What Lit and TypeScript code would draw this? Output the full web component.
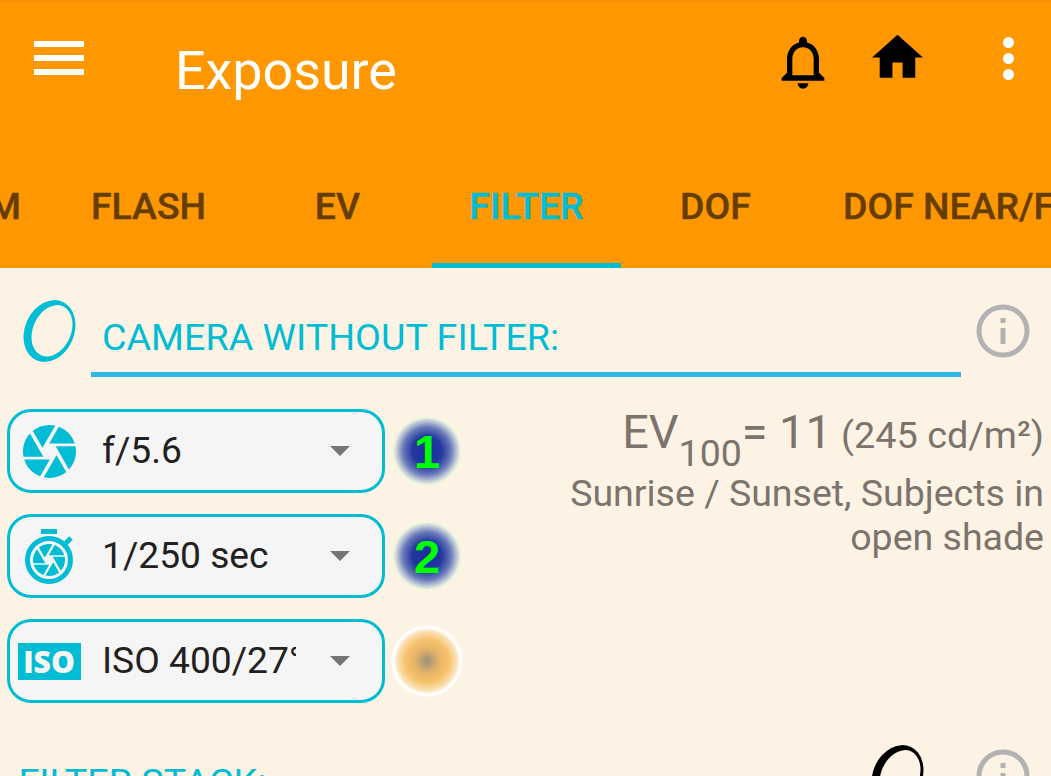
import { LitElement, html, css, svg } from "lit";
import { customElement } from "lit/decorators.js";

const CAMERA_BLADES =
  "M9.4 10.5l4.77-8.26C13.47 2.09 12.75 2 12 2c-2.4 0-4.6.85-6.32 2.25l3.66 6.35.06-.1zM21.54 9c-.92-2.92-3.15-5.26-6-6.34L11.88 9h9.66zm.26 1h-7.49l.29.5 4.76 8.25C21 16.97 22 14.61 22 12c0-.69-.07-1.35-.2-2zM8.54 12l-3.9-6.75C3.01 7.03 2 9.39 2 12c0 .69.07 1.35.2 2h7.49l-1.15-2zm-6.08 3c.92 2.92 3.15 5.26 6 6.34L12.12 15H2.46zm11.27 0l-3.9 6.76c.7.15 1.42.24 2.17.24 2.4 0 4.6-.85 6.32-2.25l-3.66-6.35-.93 1.6z";

const lens = (color: string) => html`
  <svg class="lens" viewBox="0 0 53 62" width="53" height="62">
    <ellipse cx="26.5" cy="31" rx="24.6" ry="32" transform="rotate(24 26.5 31)" fill=${color}></ellipse>
    <ellipse cx="29" cy="30.8" rx="19" ry="26.8" transform="rotate(24 29 30.8)" fill="#fdf3e5"></ellipse>
  </svg>
`;

const info = html`
  <svg class="info" viewBox="0 0 54 54" width="54" height="54">
    <circle cx="27" cy="27" r="24" fill="none" stroke="#b2b2b2" stroke-width="5"></circle>
    <rect x="24.5" y="14" width="5" height="5" fill="#b2b2b2"></rect>
    <rect x="24.5" y="24" width="5" height="16" fill="#b2b2b2"></rect>
  </svg>
`;

const aperture = html`
  <svg viewBox="2 2 20 20" width="53" height="53"><path fill="#00bcd4" d=${CAMERA_BLADES}></path></svg>
`;

const stopwatch = html`
  <svg viewBox="0 0 54 55" width="54" height="55">
    <rect x="19" y="0" width="16" height="5" fill="#00bcd4"></rect>
    <path d="M43 15l6-6" stroke="#00bcd4" stroke-width="5" fill="none"></path>
    <circle cx="27" cy="31" r="21.5" fill="none" stroke="#00bcd4" stroke-width="5"></circle>
    <g transform="translate(11 15) scale(1.6) translate(-2 -2)">
      ${svg`<path fill="#00bcd4" d=${CAMERA_BLADES}></path>`}
    </g>
  </svg>
`;

@customElement("app-root")
export class AppRoot extends LitElement {
  render() {
    return html`
      <header class="appbar">
        <div class="toolbar">
          <div class="menu"><span></span><span></span><span></span></div>
          <div class="title">Exposure</div>
          <svg class="bell" viewBox="0 0 24 24" width="64" height="64">
            <path d="M12 22c1.1 0 2-.9 2-2h-4c0 1.1.9 2 2 2zm6-6v-5c0-3.07-1.63-5.64-4.5-6.32V4c0-.83-.67-1.5-1.5-1.5s-1.5.67-1.5 1.5v.68C7.64 5.36 6 7.92 6 11v5l-2 2v1h16v-1l-2-2zm-2 1H8v-6c0-2.48 1.51-4.5 4-4.5s4 2.02 4 4.5v6z"></path>
          </svg>
          <svg class="home" viewBox="0 0 24 24" width="61" height="61">
            <path d="M10 20v-6h4v6h5v-8h3L12 3 2 12h3v8z"></path>
          </svg>
          <div class="more"><span></span><span></span><span></span></div>
        </div>
        <nav class="tabs">
          <div class="tab-clip"><div class="tab">FOCAL 35MM</div></div>
          <div class="tab">FLASH</div>
          <div class="tab">EV</div>
          <div class="tab active">FILTER</div>
          <div class="tab">DOF</div>
          <div class="tab">DOF NEAR/FAR</div>
        </nav>
      </header>

      <main class="content">
        <section class="head">
          <div class="lens-cell">${lens("#00bcd4")}</div>
          <div class="field">CAMERA WITHOUT FILTER:</div>
          ${info}
        </section>

        <section class="settings">
          <div class="pickers">
            <div class="picker-row">
              <div class="spinner">
                <div class="icon">${aperture}</div>
                <div class="value">f/5.6</div>
                <div class="arrow"></div>
              </div>
              <div class="dial blue">1</div>
            </div>
            <div class="picker-row">
              <div class="spinner">
                <div class="icon">${stopwatch}</div>
                <div class="value">1/250 sec</div>
                <div class="arrow"></div>
              </div>
              <div class="dial blue">2</div>
            </div>
            <div class="picker-row">
              <div class="spinner">
                <div class="icon"><div class="iso">ISO</div></div>
                <div class="value">ISO 400/27°</div>
                <div class="arrow"></div>
              </div>
              <div class="dial amber"></div>
            </div>
          </div>
          <div class="result">
            <div class="ev"><span class="big">EV<sub>100</sub>= 11</span> (245 cd/m²)</div>
            <div class="desc">Sunrise / Sunset, Subjects in open shade</div>
          </div>
        </section>

        <section class="head stack">
          <div class="stack-title">FILTER STACK:</div>
          ${lens("#000")}
          ${info}
        </section>
      </main>
    `;
  }

  static styles = css`
    :host {
      display: block;
      height: 776px;
      overflow: hidden;
      background: #fdf3e5;
      font-family: Roboto, sans-serif;
    }
    svg {
      display: block;
      flex-shrink: 0;
    }

    .appbar {
      height: 268px;
      background: linear-gradient(#f39000, #ff9800 4px);
      overflow: hidden;
    }
    .toolbar {
      display: flex;
      height: 144px;
      align-items: flex-start;
    }
    .menu {
      display: flex;
      flex-direction: column;
      gap: 8.5px;
      width: 50px;
      margin: 41px 0 0 34px;
    }
    .menu span {
      height: 5.5px;
      background: #fff;
    }
    .title {
      margin: 40px 0 0 91px;
      font-size: 53.8px;
      line-height: 61px;
      color: #fff;
    }
    .bell {
      margin: 30px 0 0 auto;
    }
    .home {
      margin: 27px 0 0 32px;
    }
    .more {
      display: flex;
      flex-direction: column;
      gap: 5px;
      margin: 37px 37px 0 75px;
    }
    .more span {
      width: 11px;
      height: 11px;
      border-radius: 50%;
      background: #fff;
    }

    .tabs {
      display: flex;
      height: 124px;
    }
    .tab-clip {
      display: flex;
      justify-content: flex-end;
      width: 54px;
      flex-shrink: 0;
      overflow: hidden;
    }
    .tab {
      flex-shrink: 0;
      box-sizing: border-box;
      min-width: 189px;
      padding: 41px 33px 0;
      text-align: center;
      white-space: nowrap;
      font-size: 37.4px;
      line-height: 43px;
      font-weight: 500;
      color: #663d00;
      -webkit-text-stroke: 0.4px #663d00;
    }
    .tab.active {
      color: #00bcd4;
      -webkit-text-stroke: 0.4px #00bcd4;
      border-bottom: 5px solid #00bcd4;
    }

    .content {
      display: flex;
      flex-direction: column;
    }
    .head {
      display: flex;
      align-items: flex-start;
      height: 109px;
      padding: 32px 21px 0 23px;
      box-sizing: border-box;
    }
    .lens-cell {
      width: 68px;
      flex-shrink: 0;
    }
    .field {
      box-sizing: border-box;
      width: 871px;
      height: 77px;
      padding: 16px 0 0 11px;
      border-bottom: 5px solid #33b5e5;
      margin-right: 15px;
      font-size: 37.7px;
      line-height: 43px;
      color: #00bcd4;
    }
    .info {
      margin-top: 4px;
    }

    .settings {
      box-sizing: border-box;
      display: flex;
      justify-content: space-between;
      padding: 32px 7px 0;
      height: 336px;
    }
    .pickers {
      display: flex;
      flex-direction: column;
      gap: 21px;
    }
    .picker-row {
      display: flex;
      align-items: center;
      gap: 7px;
    }
    .spinner {
      box-sizing: border-box;
      display: flex;
      align-items: center;
      width: 378px;
      height: 84px;
      border: 3px solid #00bcd4;
      border-radius: 24px;
      background: #f5f5f5;
    }
    .icon {
      display: flex;
      justify-content: center;
      width: 78px;
      flex-shrink: 0;
    }
    .value {
      width: 194px;
      margin: 0 0 2px 14px;
      overflow: hidden;
      white-space: nowrap;
      font-size: 37.2px;
      line-height: 43px;
      color: #212121;
    }
    .arrow {
      width: 0;
      height: 0;
      margin-left: 34px;
      border-style: solid;
      border-width: 10px 10px 0;
      border-color: #757575 transparent transparent;
    }
    .iso {
      box-sizing: border-box;
      width: 63px;
      height: 37px;
      background: #00bcd4;
      text-align: center;
      font-family: "Open Sans", sans-serif;
      font-size: 30px;
      font-weight: 800;
      line-height: 37px;
      color: #f5f5f5;
    }
    .dial {
      width: 70px;
      height: 70px;
      border-radius: 50%;
      text-align: center;
      font-family: "Liberation Sans", sans-serif;
      font-size: 47px;
      font-weight: 700;
      line-height: 72px;
      color: #00ff00;
    }
    .dial.blue {
      background: radial-gradient(circle closest-side, #1a2f9e 0%, #22389f 42%, #6878b8 68%, #c0c9d8 86%, #eef6dd 96%, #eef6dd 100%);
    }
    .dial.amber {
      background: radial-gradient(circle closest-side, #9b907c 0%, #e6b468 35%, #f7c26c 62%, #fbe2b8 85%, #fff 95%, #fff 100%);
      box-shadow: 0 0 1px 1px #fffaf2;
    }

    .result {
      width: 480px;
      text-align: right;
      color: #7b736c;
      font-size: 37.5px;
    }
    .ev {
      height: 64px;
      margin-top: -2px;
      white-space: nowrap;
      font-size: 37.8px;
      line-height: 50px;
    }
    .ev .big {
      font-size: 46.8px;
    }
    .ev sub {
      font-size: 37.5px;
      line-height: 0;
      vertical-align: -18px;
    }
    .desc {
      line-height: 44px;
    }

    .stack {
      justify-content: flex-start;
    }
    .stack-title {
      padding: 16px 0 0 0;
      margin-left: -4.5px;
      margin-right: auto;
      font-size: 37.7px;
      line-height: 43px;
      color: #00bcd4;
    }
    .stack .info {
      margin-left: 52px;
    }
  `;
}
